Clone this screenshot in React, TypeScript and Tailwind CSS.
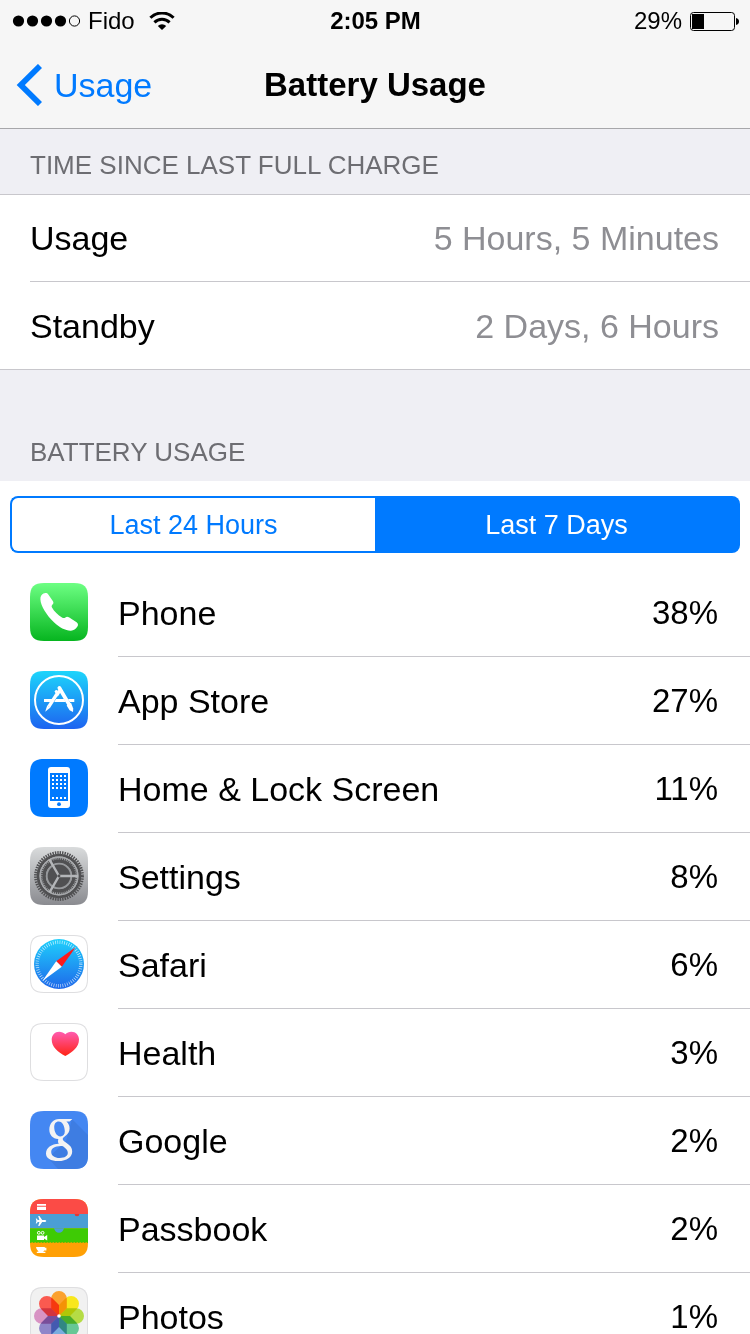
import { useState } from "react";
import type { ReactNode } from "react";

const TILE = "M14 0H44C54 0 58 4 58 14V44C58 54 54 58 44 58H14C4 58 0 54 0 44V14C0 4 4 0 14 0Z";

function Tile({ id, fill, outline, children }: { id: string; fill: string; outline?: boolean; children: ReactNode }) {
  return (
    <svg viewBox="0 0 58 58" className="mt-3.5 size-[58px] shrink-0" aria-hidden="true">
      <clipPath id={`${id}-clip`}>
        <path d={TILE} />
      </clipPath>
      <path d={TILE} fill={fill} />
      <g clipPath={`url(#${id}-clip)`}>
        {children}
        {outline && <path d={TILE} fill="none" stroke="#dedee0" strokeWidth="2" />}
      </g>
    </svg>
  );
}

function Gradient({ id, from, to }: { id: string; from: string; to: string }) {
  return (
    <linearGradient id={id} x1="0" y1="0" x2="0" y2="1">
      <stop offset="0" stopColor={from} />
      <stop offset="1" stopColor={to} />
    </linearGradient>
  );
}

function PhoneIcon() {
  return (
    <Tile id="phone" fill="url(#phone-bg)">
      <Gradient id="phone-bg" from="#6dff83" to="#06b51f" />
      <path
        fill="#fff"
        d="M13.4 10.6C15 9.7 17.2 9.8 18.3 11.4L22.8 18C23.7 19.4 23.6 20.6 22.5 21.6C21.6 22.5 21.4 23.4 22 24.6C24.2 28.6 28 32.2 32 34.4C33.4 35.2 34.4 35.1 35.4 34.4C36.6 33.6 37.6 33.6 38.9 34.3L46.6 39.2C48.2 40.3 48.4 42 47.4 43.6C45.8 46.2 43.6 47.6 41 47.7C35.8 47.9 29.4 44.6 24.2 39.6C16.8 32.4 10.6 23 10.4 16.2C10.3 13.6 11.4 11.6 13.4 10.6Z"
      />
    </Tile>
  );
}

function AppStoreIcon() {
  return (
    <Tile id="store" fill="url(#store-bg)">
      <Gradient id="store-bg" from="#1dd5fb" to="#1d63f0" />
      <circle cx="29" cy="29" r="24" fill="none" stroke="#fff" strokeWidth="2" />
      <path d="M14 28H22.4L20.6 31H14ZM26 28H34L35.8 31H24.2ZM38 28H44.3V31H39.8Z" fill="#fff" />
      <path d="M27.3 22.4L18.8 35.6" stroke="#fff" strokeWidth="3.4" />
      <path d="M17.2 34.4L20.4 36.6L15.2 40.7Z" fill="#fff" />
      <circle cx="26.4" cy="20.6" r="1.7" fill="#fff" />
      <path d="M29.4 17L39.2 33.6" stroke="#fff" strokeWidth="3.8" strokeLinecap="round" />
      <path d="M26.6 24.6L30.6 18.4" stroke="#fff" strokeWidth="3" />
      <path d="M36.6 34.4L41 31.8L43.2 37.4L43 41L39.6 39.2Z" fill="#fff" />
    </Tile>
  );
}

function HomeIcon() {
  return (
    <Tile id="home" fill="#007aff">
      <rect x="18" y="8" width="22" height="41" rx="3" fill="#fff" />
      <rect x="20" y="14" width="18" height="28" fill="#007aff" />
      {[16, 20, 24, 28, 38].map((y) =>
        [22, 26, 30, 34].map((x) => <rect key={`${x}-${y}`} x={x} y={y} width="2" height="2" fill="#fff" />),
      )}
      <circle cx="29" cy="45.2" r="1.9" fill="#007aff" />
    </Tile>
  );
}

function SettingsIcon() {
  return (
    <Tile id="gear" fill="url(#gear-bg)">
      <Gradient id="gear-bg" from="#d9dbdc" to="#8a8b90" />
      <circle cx="29" cy="29" r="23.4" fill="none" stroke="#505052" strokeWidth="3" strokeDasharray="1.4 1.05" />
      <circle cx="29" cy="29" r="20.9" fill="none" stroke="#505052" strokeWidth="2.8" />
      <circle cx="29" cy="29" r="19.5" fill="#a6a8ab" />
      <circle cx="29" cy="29" r="17" fill="none" stroke="#505052" strokeWidth="2" strokeDasharray="1.1 .8" />
      <circle cx="29" cy="29" r="14.8" fill="none" stroke="#505052" strokeWidth="3.4" />
      <circle cx="29" cy="29" r="12.3" fill="none" stroke="#97999c" strokeWidth="1.8" />
      <circle cx="29" cy="29" r="11.4" fill="#505052" />
      <path d="M29 29H48M29 29L19.5 12.6M29 29L19.5 45.4" stroke="#b4b6b9" strokeWidth="2.4" />
      <circle cx="29" cy="29" r="1.4" fill="#505052" />
    </Tile>
  );
}

function SafariIcon() {
  return (
    <Tile id="safari" fill="#fff" outline>
      <Gradient id="safari-bg" from="#1fd0fc" to="#1e68ea" />
      <circle cx="29" cy="29" r="25" fill="url(#safari-bg)" />
      <circle cx="29" cy="29" r="21.8" fill="none" stroke="#fff" strokeOpacity=".75" strokeWidth="3.4" strokeDasharray=".7 1.583" />
      <path d="M45.8 12L26.2 26.2L31.8 31.8Z" fill="#fe1a1c" />
      <path d="M12.4 46L26.2 26.2L31.8 31.8Z" fill="#fff" />
    </Tile>
  );
}

function HealthIcon() {
  return (
    <Tile id="health" fill="#fff" outline>
      <Gradient id="health-heart" from="#ff5bb0" to="#ff2414" />
      <path
        fill="url(#health-heart)"
        d="M35.3 11.2C33.8 9.6 31.6 8.7 29.2 8.7C24.8 8.7 21.7 12 21.7 16.6C21.7 24 27.8 29.2 35.3 33C42.8 29.2 49 24 49 16.6C49 12 45.8 8.7 41.4 8.7C39 8.7 36.8 9.6 35.3 11.2Z"
      />
    </Tile>
  );
}

function GoogleIcon() {
  return (
    <Tile id="google" fill="#4487f2">
      <path d="M42 8L58 24V58H28L18 47L36 30Z" fill="#3e7de2" />
      <path
        fill="#f3f3f3"
        fillRule="evenodd"
        d="M29 8H42.4L39.6 10.4H36.4C38.6 12.2 39.6 14.6 39.6 17.5C39.6 20.8 38 23.2 35 25.2C33 26.6 32.6 27.4 32.8 28.4C33 29.6 34.6 30.6 36.6 32C40.4 34.6 42.2 36.8 42.2 40.4C42.2 45.9 37 50 28.3 50C20.6 50 16 47 16 42.4C16 36.6 21.4 33 28.8 32.7C28.2 31.8 27.9 31 28 30L28.3 28C22.8 28.1 19.3 23.9 19.3 18.6C19.3 12.6 23.4 8 29 8ZM28.8 10.4C25.6 10.4 24.2 12.8 24.2 16C24.2 20.8 26.6 25.4 30.3 25.4C33.2 25.4 34.8 23.4 34.8 20.2C34.8 15.2 32.4 10.4 28.8 10.4ZM31 35.1C24.6 35.2 21.2 37.6 21.2 41C21.2 44.6 24.6 47 29.7 47C34.8 47 37.8 45 37.8 41.8C37.8 39.2 36.2 37.6 33 35.2C32.4 35.1 31.6 35.1 31 35.1Z"
      />
    </Tile>
  );
}

function PassbookIcon() {
  return (
    <Tile id="pass" fill="#ffa005">
      <rect width="58" height="15" fill="#fb4b46" />
      <rect y="15" width="58" height="14.3" fill="#4b9ed5" />
      <path d="M44.6 15A2.4 2.2 0 0 0 49.4 15Z" fill="#e23a36" />
      <rect y="29.3" width="58" height="14" fill="#3ecb05" />
      <path d="M24 29.3C24.6 32 26.4 33.8 29 33.8C31.6 33.8 33.4 32 34 29.3Z" fill="#4b9ed5" />
      <path d="M0 43.5H58" stroke="#5fbd05" strokeWidth="1.2" strokeDasharray="1.5 1.5" />
      <g fill="#fff">
        <path d="M7 5H16V6.7H7ZM7 7.7H16V11H7Z" />
        <path d="M16.2 22C16.2 21.3 15.4 21 14.4 21H12.2L9.4 17H8.2L9.4 21H7.8L6.6 19.6H5.8L6.4 22L5.8 24.4H6.6L7.8 23H9.4L8.2 27H9.4L12.2 23H14.4C15.4 23 16.2 22.7 16.2 22Z" />
        <path d="M7 36.6H14V38L17.2 36V41.4L14 39.6V41H7Z" />
        <path d="M6 48H14.8V48.8H16.4V51.6H14.2L13.2 52.8H15.4V54H6.8V52.8H8.6L6.6 50Z" />
      </g>
      <circle cx="8.8" cy="33.8" r="1.4" fill="none" stroke="#fff" />
      <circle cx="12.6" cy="33.8" r="1.4" fill="none" stroke="#fff" />
    </Tile>
  );
}

const PETALS = ["#fba12f", "#f8e71c", "#b5dc45", "#66c795", "#79addf", "#8f85c9", "#d893c4", "#fa5a50"];

function PhotosIcon() {
  return (
    <Tile id="photos" fill="#f1f1f1" outline>
      <g className="isolate">
        {PETALS.map((color, i) => (
          <path
            key={color}
            className="mix-blend-multiply"
            transform={`rotate(${i * 45} 29 29)`}
            d="M29 29L21.2 21.2V11.8A7.8 7.8 0 0 1 36.8 11.8V21.2Z"
            fill={color}
          />
        ))}
      </g>
      <circle cx="29" cy="29" r="1.8" fill="#fff" />
    </Tile>
  );
}

const TOTALS = [
  { label: "Usage", value: "5 Hours, 5 Minutes" },
  { label: "Standby", value: "2 Days, 6 Hours" },
];

const APPS = [
  { name: "Phone", share: 38, Icon: PhoneIcon },
  { name: "App Store", share: 27, Icon: AppStoreIcon },
  { name: "Home & Lock Screen", share: 11, Icon: HomeIcon },
  { name: "Settings", share: 8, Icon: SettingsIcon },
  { name: "Safari", share: 6, Icon: SafariIcon },
  { name: "Health", share: 3, Icon: HealthIcon },
  { name: "Google", share: 2, Icon: GoogleIcon },
  { name: "Passbook", share: 2, Icon: PassbookIcon },
  { name: "Photos", share: 1, Icon: PhotosIcon },
];

const PERIODS = ["Last 24 Hours", "Last 7 Days"];

function StatusBar() {
  return (
    <div className="grid h-[41px] grid-cols-[1fr_auto_1fr] items-center pr-[11px] pl-3 text-2xl">
      <div className="flex items-center">
        <svg viewBox="0 0 70 12" className="mr-1.5 h-3 w-[70px]" aria-hidden="true">
          {[6.5, 20.5, 34.5, 48.5].map((x) => (
            <circle key={x} cx={x} cy="6" r="5.6" />
          ))}
          <circle cx="62.5" cy="6" r="5.1" fill="none" stroke="#000" />
        </svg>
        <span>Fido</span>
        <svg viewBox="0 0 26 18" className="ml-3.5 h-[18px] w-[26px]" aria-hidden="true">
          <path d="M1.4 5.8A16.4 16.4 0 0 1 24.6 5.8" fill="none" stroke="#000" strokeWidth="3" />
          <path d="M5.4 10.4A10.8 10.8 0 0 1 20.6 10.4" fill="none" stroke="#000" strokeWidth="2.9" />
          <path d="M8.8 13.9A6 6 0 0 1 17.2 13.9L13 18Z" />
        </svg>
      </div>
      <span className="font-bold">2:05 PM</span>
      <div className="flex items-center justify-end gap-2">
        <span>29%</span>
        <svg viewBox="0 0 49 20" className="h-5 w-[49px]" aria-hidden="true">
          <rect x=".5" y="1.5" width="44" height="18" rx="3" fill="none" stroke="#000" />
          <rect x="2" y="3" width="12" height="15" />
          <path d="M46 7C48 7.5 49 8.7 49 10.5S48 13.5 46 14Z" />
        </svg>
      </div>
    </div>
  );
}

export default function App() {
  const [period, setPeriod] = useState(PERIODS[1]);

  return (
    <div className="flex h-screen flex-col bg-white font-['Liberation_Sans',Arial,sans-serif] text-black">
      <header className="shrink-0 border-b border-[#a7a7aa] bg-[#f6f6f6]">
        <StatusBar />
        <nav className="grid h-[87px] grid-cols-[1fr_auto_1fr] items-center px-4">
          <a href="#usage" className="flex items-center gap-3 text-[34px] leading-10 text-[#007aff]">
            <svg viewBox="0 0 26 42" className="h-[42px] w-[26px]" aria-hidden="true">
              <path d="M24 2L4.8 21L24 40" fill="none" stroke="currentColor" strokeWidth="5.8" />
            </svg>
            Usage
          </a>
          <h1 className="text-[33px] leading-10 font-bold">Battery Usage</h1>
        </nav>
      </header>

      <main className="min-h-0 flex-1 overflow-y-auto [scrollbar-width:none]">
        <h2 className="flex h-[66px] items-end border-b border-[#c8c7cc] bg-[#efeff4] px-[30px] pb-[13px] text-[26px] leading-8 text-[#6d6d72]">
          TIME SINCE LAST FULL CHARGE
        </h2>
        <dl className="border-b border-[#c8c7cc] pl-[30px] text-[34px] leading-10">
          {TOTALS.map(({ label, value }) => (
            <div
              key={label}
              className="flex h-[87px] items-center justify-between border-[#c8c7cc] pr-[31px] not-last:border-b"
            >
              <dt>{label}</dt>
              <dd className="text-[#8e8e93]">{value}</dd>
            </div>
          ))}
        </dl>
        <h2 className="flex h-[111px] items-end bg-[#efeff4] px-[30px] pb-[13px] text-[26px] leading-8 text-[#6d6d72]">
          BATTERY USAGE
        </h2>

        <div className="grid grid-cols-2 px-2.5 pt-[15px] pb-4">
          {PERIODS.map((name) => (
            <button
              key={name}
              type="button"
              aria-pressed={period === name}
              onClick={() => setPeriod(name)}
              className="h-[57px] border-2 border-[#007aff] text-[27px] leading-8 text-[#007aff] first:rounded-l-lg first:border-r-0 last:rounded-r-lg last:border-l-0 aria-pressed:bg-[#007aff] aria-pressed:text-white"
            >
              {name}
            </button>
          ))}
        </div>

        <ul>
          {APPS.map(({ name, share, Icon }) => (
            <li key={name} className="flex h-22 gap-[30px] pl-[30px]">
              <Icon />
              <div className="flex flex-1 items-center justify-between border-b border-[#c8c7cc] pr-8 text-[34px] leading-10">
                <span>{name}</span>
                <span className="text-[33px]">{share}%</span>
              </div>
            </li>
          ))}
        </ul>
      </main>
    </div>
  );
}
